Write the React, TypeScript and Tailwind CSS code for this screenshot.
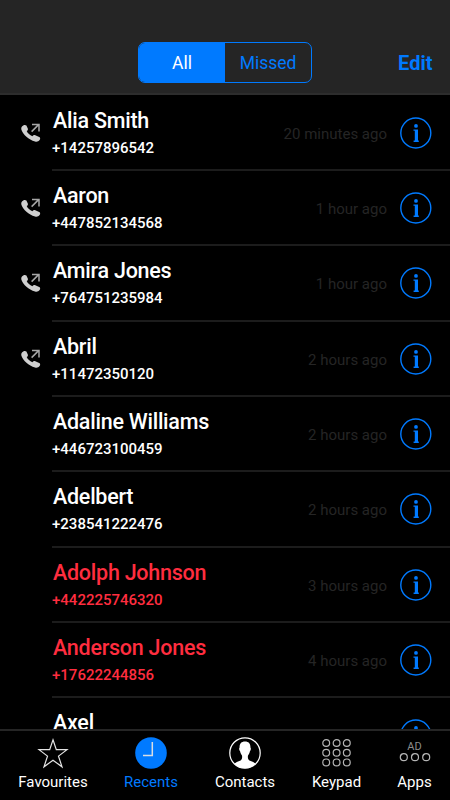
import React, { useState } from 'react';
import clsx from 'clsx';

type Call = {
    name: string;
    phone: string;
    time: string;
    outgoing?: boolean;
    missed?: boolean;
};

const CALLS: Call[] = [
    { name: 'Alia Smith', phone: '+14257896542', time: '20 minutes ago', outgoing: true },
    { name: 'Aaron', phone: '+447852134568', time: '1 hour ago', outgoing: true },
    { name: 'Amira Jones', phone: '+764751235984', time: '1 hour ago', outgoing: true },
    { name: 'Abril', phone: '+11472350120', time: '2 hours ago', outgoing: true },
    { name: 'Adaline Williams', phone: '+446723100459', time: '2 hours ago' },
    { name: 'Adelbert', phone: '+238541222476', time: '2 hours ago' },
    { name: 'Adolph Johnson', phone: '+442225746320', time: '3 hours ago', missed: true },
    { name: 'Anderson Jones', phone: '+17622244856', time: '4 hours ago', missed: true },
    { name: 'Axel', phone: '', time: '' },
];

const OutgoingIcon = () => (
    <svg width="20" height="20" viewBox="0 0 20 20" fill="none">
        <path
            d="M1 3.6C2 2.1 4.2 1.4 5.4 2.6L6.8 5.4C7.3 6.6 6.6 7.4 5.7 8.1C6.7 10.4 8.9 12.4 11.4 13.2C12.2 12.2 13.2 11.8 14.3 12.3L18.2 13.9C19.5 14.6 19.4 15.9 18.6 17C17.5 18.5 15.9 19.1 14 18.5C7.6 16.7 2.2 11.8.5 7C.1 5.7.2 4.6 1 3.6Z"
            fill="#cfcfcf"
        />
        <path d="M10.6 8.6L17.6 1.6M11 1.6H18V8.4" stroke="#a6a6a6" strokeWidth="1.5" />
    </svg>
);

const InfoIcon = () => (
    <svg width="32" height="32" viewBox="0 0 32 32" fill="none">
        <circle cx="15.8" cy="16" r="15" stroke="#007aff" strokeWidth="1.4" />
        <circle cx="16" cy="8.9" r="1.9" fill="#007aff" />
        <path d="M13.5 12.4H18V23.6H18.8V25H13.6V23.6H14.8V13.8H13.5Z" fill="#007aff" />
    </svg>
);

const StarIcon = () => (
    <svg width="32" height="32" viewBox="0 0 32 32" fill="none">
        <path
            d="M16 2.8L19.3 12.6L30 12.7L21.5 19.1L25 29.8L16 23.2L7 29.8L10.5 19.1L2 12.7L12.7 12.6Z"
            stroke="#e4e4e4"
            strokeWidth="1.2"
        />
    </svg>
);

const ClockIcon = () => (
    <svg width="32" height="32" viewBox="0 0 32 32" fill="none">
        <circle cx="16" cy="16" r="15.8" fill="#007aff" />
        <path d="M17.3 5V18.4H8" stroke="#d9dde2" strokeWidth="1.5" />
    </svg>
);

const ContactIcon = () => (
    <svg width="32" height="32" viewBox="0 0 32 32" fill="none">
        <circle cx="16" cy="16" r="15.2" stroke="#fff" strokeWidth="1.2" />
        <path
            d="M16 4.6C19.8 4.6 21.6 7 21.4 10.6C22.2 11 21.8 13.4 21 14C20.6 16.2 19.6 17.8 19 18.6C18.6 20.8 19 22.6 20.4 23.4C23 24.6 25.8 25.2 26.6 27C21 32.6 11 32.6 5.4 27C6.2 25.2 9 24.6 11.6 23.4C13 22.6 13.4 20.8 13 18.6C12.4 17.8 11.4 16.2 11 14C10.2 13.4 9.8 11 10.6 10.6C10.4 7 12.2 4.6 16 4.6Z"
            fill="#fff"
        />
    </svg>
);

const KeypadIcon = () => (
    <svg width="32" height="32" viewBox="0 0 32 32" fill="none" stroke="#b5b5b5" strokeWidth="1.2">
        {[6, 15.8, 25.4].map(y => [5.2, 15.6, 25.8].map(x => <circle key={`${x}-${y}`} cx={x} cy={y} r="3.4" />))}
    </svg>
);

const AppsIcon = () => (
    <div className="flex h-8 flex-col items-center pt-[4px]">
        <span className="text-[11px] leading-[12px] text-[#8c8c8c]">AD</span>
        <svg width="32" height="10" viewBox="0 0 32 10" fill="none" stroke="#b5b5b5" strokeWidth="1.2">
            {[4.8, 16, 27.2].map(x => (
                <circle key={x} cx={x} cy="4.2" r="3.5" />
            ))}
        </svg>
    </div>
);

const TABS = [
    { label: 'Favourites', icon: <StarIcon /> },
    { label: 'Recents', icon: <ClockIcon /> },
    { label: 'Contacts', icon: <ContactIcon /> },
    { label: 'Keypad', icon: <KeypadIcon /> },
    { label: 'Apps', icon: <AppsIcon /> },
];

const CallRow: React.FC<{ call: Call }> = ({ call }) => (
    <li className="flex h-[75.35px] shrink-0">
        <div className="w-[52px] shrink-0 pt-[27px] pl-[21px]">{call.outgoing && <OutgoingIcon />}</div>
        <div className="flex flex-1 border-b-2 border-[#1c1c1c]">
            <div className={clsx('flex-1 whitespace-nowrap font-medium', call.missed ? 'text-[#ff2d3f]' : 'text-white')}>
                <div className="pt-[12px] pl-px text-[21.5px] leading-[26px] tracking-[-0.25px]">{call.name}</div>
                <div className="pt-[5px] text-[15px] leading-[18px]">{call.phone}</div>
            </div>
            <span className="pt-[28px] text-[15px] leading-[20px] text-[#252525]">{call.time}</span>
            <button className="h-8 pt-[21px] pr-[18px] pl-[13px]">
                <InfoIcon />
            </button>
        </div>
    </li>
);

export default function App() {
    const [filter, setFilter] = useState('All');
    const [tab, setTab] = useState('Recents');
    const calls = filter === 'Missed' ? CALLS.filter(c => c.missed) : CALLS;

    return (
        <div className="flex h-[800px] w-[450px] flex-col overflow-hidden bg-black font-[Roboto,sans-serif]">
            <header className="grid h-[95px] shrink-0 grid-cols-[138px_174px_1fr] items-start border-b-2 border-[#2d2d2d] bg-[#252525] pt-[41.5px]">
                <div className="col-start-2 flex h-[41.5px] overflow-hidden rounded-[7px] border-[1.5px] border-[#007aff]">
                    {['All', 'Missed'].map(f => (
                        <button
                            key={f}
                            onClick={() => setFilter(f)}
                            className={clsx('flex-1 pt-[2px] text-[17.5px]', filter === f ? 'bg-[#007aff] text-white' : 'text-[#007aff]')}
                        >
                            {f}
                        </button>
                    ))}
                </div>
                <button className="h-[43px] pr-[17.5px] text-right text-[20px] font-bold text-[#007aff]">Edit</button>
            </header>

            <ul className="flex min-h-0 flex-1 flex-col overflow-hidden pt-[0.55px]">
                {calls.map(call => (
                    <CallRow key={call.phone + call.name} call={call} />
                ))}
            </ul>

            <nav className="grid h-[71px] shrink-0 grid-cols-[106px_90px_98px_85px_71px] border-t-2 border-[#252525]">
                {TABS.map(t => (
                    <button
                        key={t.label}
                        onClick={() => setTab(t.label)}
                        className={clsx('flex flex-col items-center pt-[6px]', tab === t.label ? 'text-[#007aff]' : 'text-white')}
                    >
                        {t.icon}
                        <span className="mt-[4px] text-[15px] leading-[18px]">{t.label}</span>
                    </button>
                ))}
            </nav>
        </div>
    );
}
